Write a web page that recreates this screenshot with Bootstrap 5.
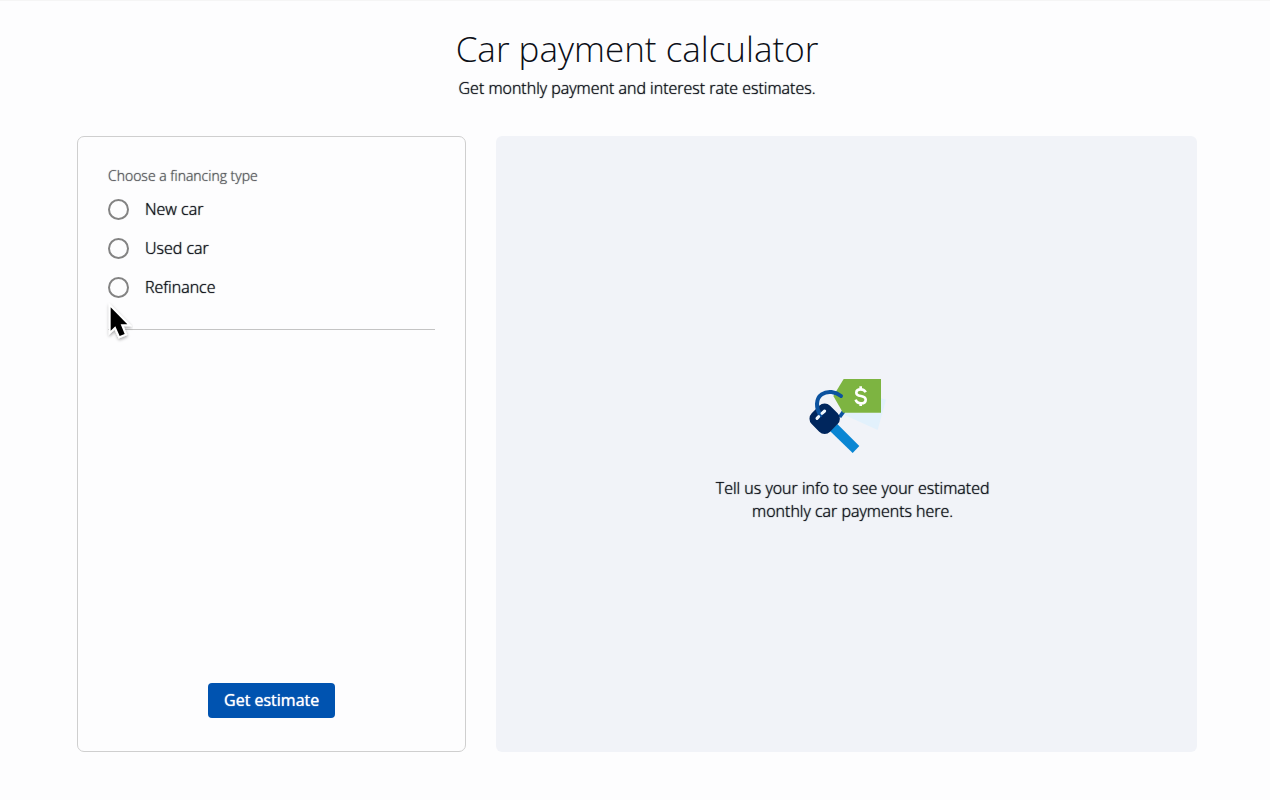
<!DOCTYPE html>
<html lang="en">
<head>
<meta charset="utf-8">
<meta name="viewport" content="width=device-width, initial-scale=1">
<title>Car payment calculator</title>
<link href="https://cdn.jsdelivr.net/npm/bootstrap@5.3.0/dist/css/bootstrap.min.css" rel="stylesheet">
<style>
  body { font-family: "Open Sans", sans-serif; font-size: 16px; font-weight: 300; line-height: 23px; color: #0c0f17; background: #fdfdfe; text-shadow: 0 0 1px currentColor; }
  .page-shell { max-width: 1148px; padding: 27px 12px 48px 16px; }
  .top-rule { height: 1px; margin-bottom: -1px; background: #f5f5f5; }
  .page-title { font-size: 35px; font-weight: 300; line-height: 44px; margin-bottom: 6px; text-shadow: none; }
  .calc-grid { display: grid; grid-template-columns: 1fr; gap: 30px; margin-top: 36px; }
  @media (min-width: 768px) { .calc-grid { grid-template-columns: 5fr 9fr; } }
  .calc-form { border: 1px solid #cfcfcf; border-radius: 7px; padding: 29px 30px 33px; }
  .calc-legend { font-size: 14px; line-height: 20px; color: #56585c; margin-bottom: 12px; }
  .choice { display: flex; align-items: center; gap: 16px; min-height: 23px; margin: 0 0 16px; padding: 0; }
  .choice .form-check-input { float: none; flex: none; width: 21px; height: 21px; margin: 0; border: 2px solid #838383; background-color: #fdfdfe; }
  .divider { border: 0; border-top: 1px solid #c4c4c4; opacity: 1; margin: 30px 0 0; }
  .btn-estimate { --bs-btn-bg: #0053b0; --bs-btn-color: #fff; --bs-btn-hover-bg: #00438e; --bs-btn-hover-color: #fff; --bs-btn-active-bg: #00387a; --bs-btn-active-color: #fff; --bs-btn-border-width: 0; --bs-btn-border-radius: 4px; --bs-btn-padding-x: 16px; --bs-btn-padding-y: 6px; --bs-btn-line-height: 23px; --bs-btn-font-weight: 400; text-shadow: 0 0 1px currentColor; }
  .result-panel { background: #f1f3f8; border-radius: 6px; gap: 12px; padding: 24px; }
  .result-text { max-width: 300px; padding-left: 12px; }
  .pointer { position: absolute; left: -13px; bottom: -26px; pointer-events: none; }
</style>
</head>
<body>
<div class="min-vh-100 d-flex flex-column">
  <div class="top-rule"></div>
  <main class="page-shell container-fluid flex-grow-1 d-flex flex-column">
    <header class="text-center">
      <h1 class="page-title">Car payment calculator</h1>
      <p class="mb-0">Get monthly payment and interest rate estimates.</p>
    </header>
    <div class="calc-grid flex-grow-1">
      <form class="calc-form d-flex flex-column">
        <div class="position-relative">
          <fieldset>
            <legend class="calc-legend">Choose a financing type</legend>
            <div class="choice form-check">
              <input class="form-check-input" type="radio" name="financing" id="new-car">
              <label class="form-check-label" for="new-car">New car</label>
            </div>
            <div class="choice form-check">
              <input class="form-check-input" type="radio" name="financing" id="used-car">
              <label class="form-check-label" for="used-car">Used car</label>
            </div>
            <div class="choice form-check mb-0">
              <input class="form-check-input" type="radio" name="financing" id="refinance">
              <label class="form-check-label" for="refinance">Refinance</label>
            </div>
          </fieldset>
          <hr class="divider">
          <svg class="pointer" width="60" height="60" viewBox="0 0 180 180" aria-hidden="true">
            <defs><filter id="soft" x="-30%" y="-30%" width="160%" height="160%"><feDropShadow dx="1" dy="5" stdDeviation="4" flood-color="#000" flood-opacity=".35"/></filter></defs>
            <path d="M47 34V104L61 91L74 120L89 114L77 85H97Z" fill="#000" stroke="#fff" stroke-width="12" stroke-linejoin="miter" paint-order="stroke" filter="url(#soft)"/>
          </svg>
        </div>
        <div class="mt-auto text-center pt-4">
          <button class="btn btn-estimate" type="button">Get estimate</button>
        </div>
      </form>
      <section class="result-panel d-flex flex-column align-items-center justify-content-center text-center">
        <svg class="me-1" width="100" height="100" viewBox="0 0 300 300" aria-hidden="true">
          <path d="M134 143L248 195L273 104L258 100V143Z" fill="#e2f1fc"/>
          <path d="M134 156L146 139" stroke="#0b529f" stroke-width="11"/>
          <path d="M146 42H258V143H144L115 93Z" fill="#7db441"/>
          <path d="M105 198L127 177L193 243L173 264Z" fill="#0a86d3"/>
          <rect x="50" y="122" width="78" height="78" rx="23" transform="rotate(45 89 161)" fill="#00265d"/>
          <path d="M76 151C63 130 61 101 80 88C98 76 122 80 138 93" fill="none" stroke="#0b529f" stroke-width="12" stroke-linecap="round"/>
          <path d="M66 160L71 155M81 145L89 138" stroke="#eef8ff" stroke-width="9" stroke-linecap="round"/>
          <path d="M212 82C209 75 203 73 197 73C189 73 184 77 184 83C184 98 212 88 212 104C212 111 206 115 198 115C190 115 184 111 182 104M197 64V74M197 114V123" fill="none" stroke="#fff" stroke-width="8"/>
        </svg>
        <p class="result-text mb-0">Tell us your info to see your estimated monthly car payments here.</p>
      </section>
    </div>
  </main>
</div>
<script src="https://cdn.jsdelivr.net/npm/bootstrap@5.3.0/dist/js/bootstrap.bundle.min.js"></script>
</body>
</html>
